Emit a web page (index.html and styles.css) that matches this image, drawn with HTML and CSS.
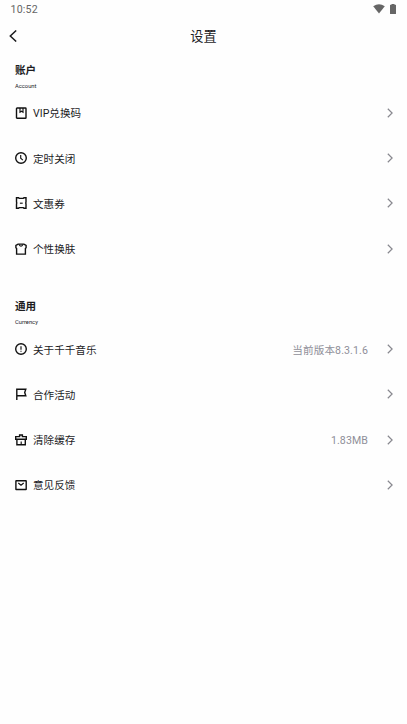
FILE: index.html
```html
<!DOCTYPE html>
<html lang="zh-CN">
<head>
<meta charset="utf-8">
<title>设置</title>
<link rel="stylesheet" href="styles.css">
</head>
<body>
<header class="status">
  <span class="time">10:52</span>
  <svg class="wifi" viewBox="0 0 12 10"><path d="M.2 2.3Q6-1.9 11.8 2.3L6 9.6Z"/></svg>
  <svg class="battery" viewBox="0 0 6 10"><path d="M1.500 0h3v.8H5.500q.5 0 .5.5v8.200q0 .5-.5.5h-5Q0 10 0 9.500V1.300Q0 .8.5.8h1Z"/></svg>
</header>
<nav class="nav">
  <svg class="back" viewBox="0 0 8 12"><path d="M7.200.5 1.300 6l5.900 5.500"/></svg>
  <h1 class="title">设置</h1>
</nav>
<main>
  <section class="group">
    <h2 class="heading">账户</h2>
    <p class="sub">Account</p>
    <ul class="list">
      <li class="row">
        <svg class="icon" viewBox="0 0 12 12"><rect x="1.500" y="1" width="9.500" height="10.300" rx=".6"/><path class="thin" d="M5 1v4.200l1.500-1 1.500 1V1"/></svg>
        <span class="label">VIP兑换码</span>
        <svg class="chevron" viewBox="0 0 6 10"><path d="M.8.8 5.100 5 .8 9.200"/></svg>
      </li>
      <li class="row">
        <svg class="icon" viewBox="0 0 12 12"><circle cx="6" cy="6" r="5.300"/><path class="thin" d="M5.700 3v3.300l2.200 1.800"/></svg>
        <span class="label">定时关闭</span>
        <svg class="chevron" viewBox="0 0 6 10"><path d="M.8.8 5.100 5 .8 9.200"/></svg>
      </li>
      <li class="row">
        <svg class="icon" viewBox="0 0 12 12"><path d="M1.500.8h2l.7.600h4.100l.7-.6h2v4.400l-.3.800.3.800v4.400H9l-.7-.6H4.200l-.7.6h-2V6.800L1.800 6l-.3-.8Z"/><path class="thin" d="M4.900 6.200h2.800"/></svg>
        <span class="label">文惠券</span>
        <svg class="chevron" viewBox="0 0 6 10"><path d="M.8.8 5.100 5 .8 9.200"/></svg>
      </li>
      <li class="row">
        <svg class="icon" viewBox="0 0 12 12"><path d="M3.100 1.100h5.800l2.200 1.400v2.300l-.7.700v5.600H1.600V5.500l-.7-.7V2.500Z"/><path class="thin" d="M4 1.500q2 3.400 4 0"/></svg>
        <span class="label">个性换肤</span>
        <svg class="chevron" viewBox="0 0 6 10"><path d="M.8.8 5.100 5 .8 9.200"/></svg>
      </li>
    </ul>
  </section>
  <section class="group">
    <h2 class="heading">通用</h2>
    <p class="sub">Currency</p>
    <ul class="list">
      <li class="row">
        <svg class="icon" viewBox="0 0 12 12"><circle cx="6" cy="6" r="5.300"/><path class="thin" d="M6 3.300v3.400M6 7.700v1.100"/></svg>
        <span class="label">关于千千音乐</span>
        <span class="value">当前版本8.3.1.6</span>
        <svg class="chevron" viewBox="0 0 6 10"><path d="M.8.8 5.100 5 .8 9.200"/></svg>
      </li>
      <li class="row">
        <svg class="icon" viewBox="0 0 12 12"><path d="M1.800 12V1.300h9L9.700 4.500l1.100 3.200h-9"/></svg>
        <span class="label">合作活动</span>
        <svg class="chevron" viewBox="0 0 6 10"><path d="M.8.8 5.100 5 .8 9.200"/></svg>
      </li>
      <li class="row">
        <svg class="icon" viewBox="0 0 12 12"><path d="M4.600 2.600V1h2.800v1.600h3.900v2.600H.7V2.600ZM1.900 5.200v5.600h8.400V5.200"/><path class="thin" d="M6.200 7.500v3.300"/></svg>
        <span class="label">清除缓存</span>
        <span class="value">1.83MB</span>
        <svg class="chevron" viewBox="0 0 6 10"><path d="M.8.8 5.100 5 .8 9.200"/></svg>
      </li>
      <li class="row">
        <svg class="icon" viewBox="0 0 12 12"><rect x=".9" y="1.700" width="10.300" height="8.800" rx=".3"/><path class="thin" d="M3.300 4 6 6.200 8.700 4"/></svg>
        <span class="label">意见反馈</span>
        <svg class="chevron" viewBox="0 0 6 10"><path d="M.8.8 5.100 5 .8 9.200"/></svg>
      </li>
    </ul>
  </section>
</main>
</body>
</html>
```
FILE: styles.css
```css
* { box-sizing: border-box; margin: 0; padding: 0; }
body {
  min-height: 724px;
  background: #fefefe;
  color: #1c1c1e;
  font-family: Roboto, "Noto Sans CJK SC", sans-serif;
}
svg { display: block; flex: none; fill: none; }
.status {
  display: flex;
  align-items: center;
  height: 18px;
  padding: 1px 11px 0 10.5px;
  color: #666;
}
.time { flex: 1; font-size: 10.6px; line-height: 17px; letter-spacing: .2px; }
.wifi, .battery { fill: #666; margin-top: -2px; }
.wifi { width: 12px; height: 10px; }
.battery { width: 6px; height: 10px; margin-left: 5px; }
.nav {
  display: grid;
  grid-template-columns: 28px 1fr 28px;
  align-items: center;
  height: 36px;
}
.back { width: 8px; height: 12px; margin-left: 9px; stroke: #1c1c1e; stroke-width: 1.5; }
.title { padding-top: 2px; text-align: center; font-size: 13.2px; font-weight: 400; line-height: 20px; }
.group { height: 236.3px; padding: 8px 14.5px 0 15px; }
.heading { padding-top: 1px; font-size: 10.6px; font-weight: 700; line-height: 16px; }
.sub { margin-top: 3px; font-size: 5.8px; font-weight: 400; line-height: 8px; }
.list { padding-top: .4px; list-style: none; }
.row { display: flex; align-items: center; height: 45.2px; }
.icon { width: 12px; height: 12px; stroke: #111; stroke-width: 1.4; }
.thin { stroke-width: 1.15; }
.label { flex: 1; margin-left: 6px; padding-top: 3px; font-size: 10.6px; font-weight: 400; line-height: 16px; }
.value { margin-right: 18.5px; padding-top: 3px; color: #8f8f99; font-size: 10.6px; line-height: 16px; letter-spacing: .1px; }
.chevron { width: 6px; height: 10px; stroke: #88888f; stroke-width: 1.2; }
```
